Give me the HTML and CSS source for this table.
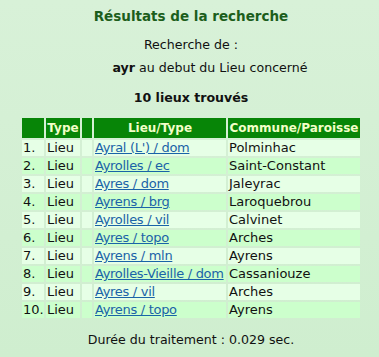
FILE: index.html
```html
<!DOCTYPE html>
<html lang="fr">
<head>
<meta charset="utf-8">
<title>Résultats de la recherche</title>
<link rel="stylesheet" href="styles.css">
</head>
<body>
<div class="page">
  <h1 class="title">Résultats de la recherche</h1>
  <p class="line line-search">Recherche de :</p>
  <p class="line line-query"><b>ayr</b> au debut du Lieu concerné</p>
  <p class="line line-count"><b>10 lieux trouvés</b></p>
  <table class="results">
    <thead>
      <tr>
        <th class="c-num"></th>
        <th class="c-type">Type</th>
        <th class="c-gap"></th>
        <th class="c-lieu">Lieu/Type</th>
        <th class="c-comm">Commune/Paroisse</th>
      </tr>
    </thead>
    <tbody>
      <tr class="odd"><td>1.</td><td>Lieu</td><td></td><td><a href="#">Ayral (L') / dom</a></td><td>Polminhac</td></tr>
      <tr class="even"><td>2.</td><td>Lieu</td><td></td><td><a href="#">Ayrolles / ec</a></td><td>Saint-Constant</td></tr>
      <tr class="odd"><td>3.</td><td>Lieu</td><td></td><td><a href="#">Ayres / dom</a></td><td>Jaleyrac</td></tr>
      <tr class="even"><td>4.</td><td>Lieu</td><td></td><td><a href="#">Ayrens / brg</a></td><td>Laroquebrou</td></tr>
      <tr class="odd"><td>5.</td><td>Lieu</td><td></td><td><a href="#">Ayrolles / vil</a></td><td>Calvinet</td></tr>
      <tr class="even"><td>6.</td><td>Lieu</td><td></td><td><a href="#">Ayres / topo</a></td><td>Arches</td></tr>
      <tr class="odd"><td>7.</td><td>Lieu</td><td></td><td><a href="#">Ayrens / mln</a></td><td>Ayrens</td></tr>
      <tr class="even"><td>8.</td><td>Lieu</td><td></td><td><a href="#">Ayrolles-Vieille / dom</a></td><td>Cassaniouze</td></tr>
      <tr class="odd"><td>9.</td><td>Lieu</td><td></td><td><a href="#">Ayres / vil</a></td><td>Arches</td></tr>
      <tr class="even"><td>10.</td><td>Lieu</td><td></td><td><a href="#">Ayrens / topo</a></td><td>Ayrens</td></tr>
    </tbody>
  </table>
  <p class="line line-time">Durée du traitement : 0.029 sec.</p>
</div>
</body>
</html>
```
FILE: styles.css
```css
html, body {
  margin: 0;
  padding: 0;
}
body {
  background: linear-gradient(180deg, #d8f1d8 0%, #cfeecf 100%);
  min-height: 357px;
  font-family: "DejaVu Sans", Verdana, sans-serif;
  font-size: 12.6px;
  color: #111;
}
.page {
  width: 342px;
  margin-left: 20px;
  padding-top: 6px;
  display: flex;
  flex-direction: column;
  align-items: center;
}
.title {
  margin: 0;
  font-size: 13.5px;
  font-weight: bold;
  color: #1c5e1c;
  line-height: 20px;
}
.line {
  margin: 0;
  line-height: 16px;
}
.line-search {
  margin-top: 11px;
}
.line-query {
  margin-top: 7px;
  padding-left: 38px;
}
.line-count {
  margin-top: 14px;
}
.results {
  margin-top: 10px;
  width: 342px;
  border-collapse: separate;
  border-spacing: 2px;
  table-layout: fixed;
  font-size: 13px;
}
.results th {
  background: #078507;
  color: #f2ffc8;
  font-weight: bold;
  font-size: 12px;
  height: 20px;
  padding: 0;
  text-align: center;
}
.results td {
  height: 16px;
  padding: 0 0 0 1px;
  line-height: 16px;
  white-space: nowrap;
  overflow: hidden;
}
.results tr.odd td { background: #e6ffe6; }
.results tr.even td { background: #ccffcc; }
.c-num { width: 22px; }
.c-type { width: 34px; }
.c-gap { width: 10px; }
.c-lieu { width: 132px; }
.c-comm { width: 132px; }
.results a {
  color: #1a63a8;
  text-decoration: underline;
  letter-spacing: -0.3px;
}
.line-time {
  margin-top: 12px;
}
```
